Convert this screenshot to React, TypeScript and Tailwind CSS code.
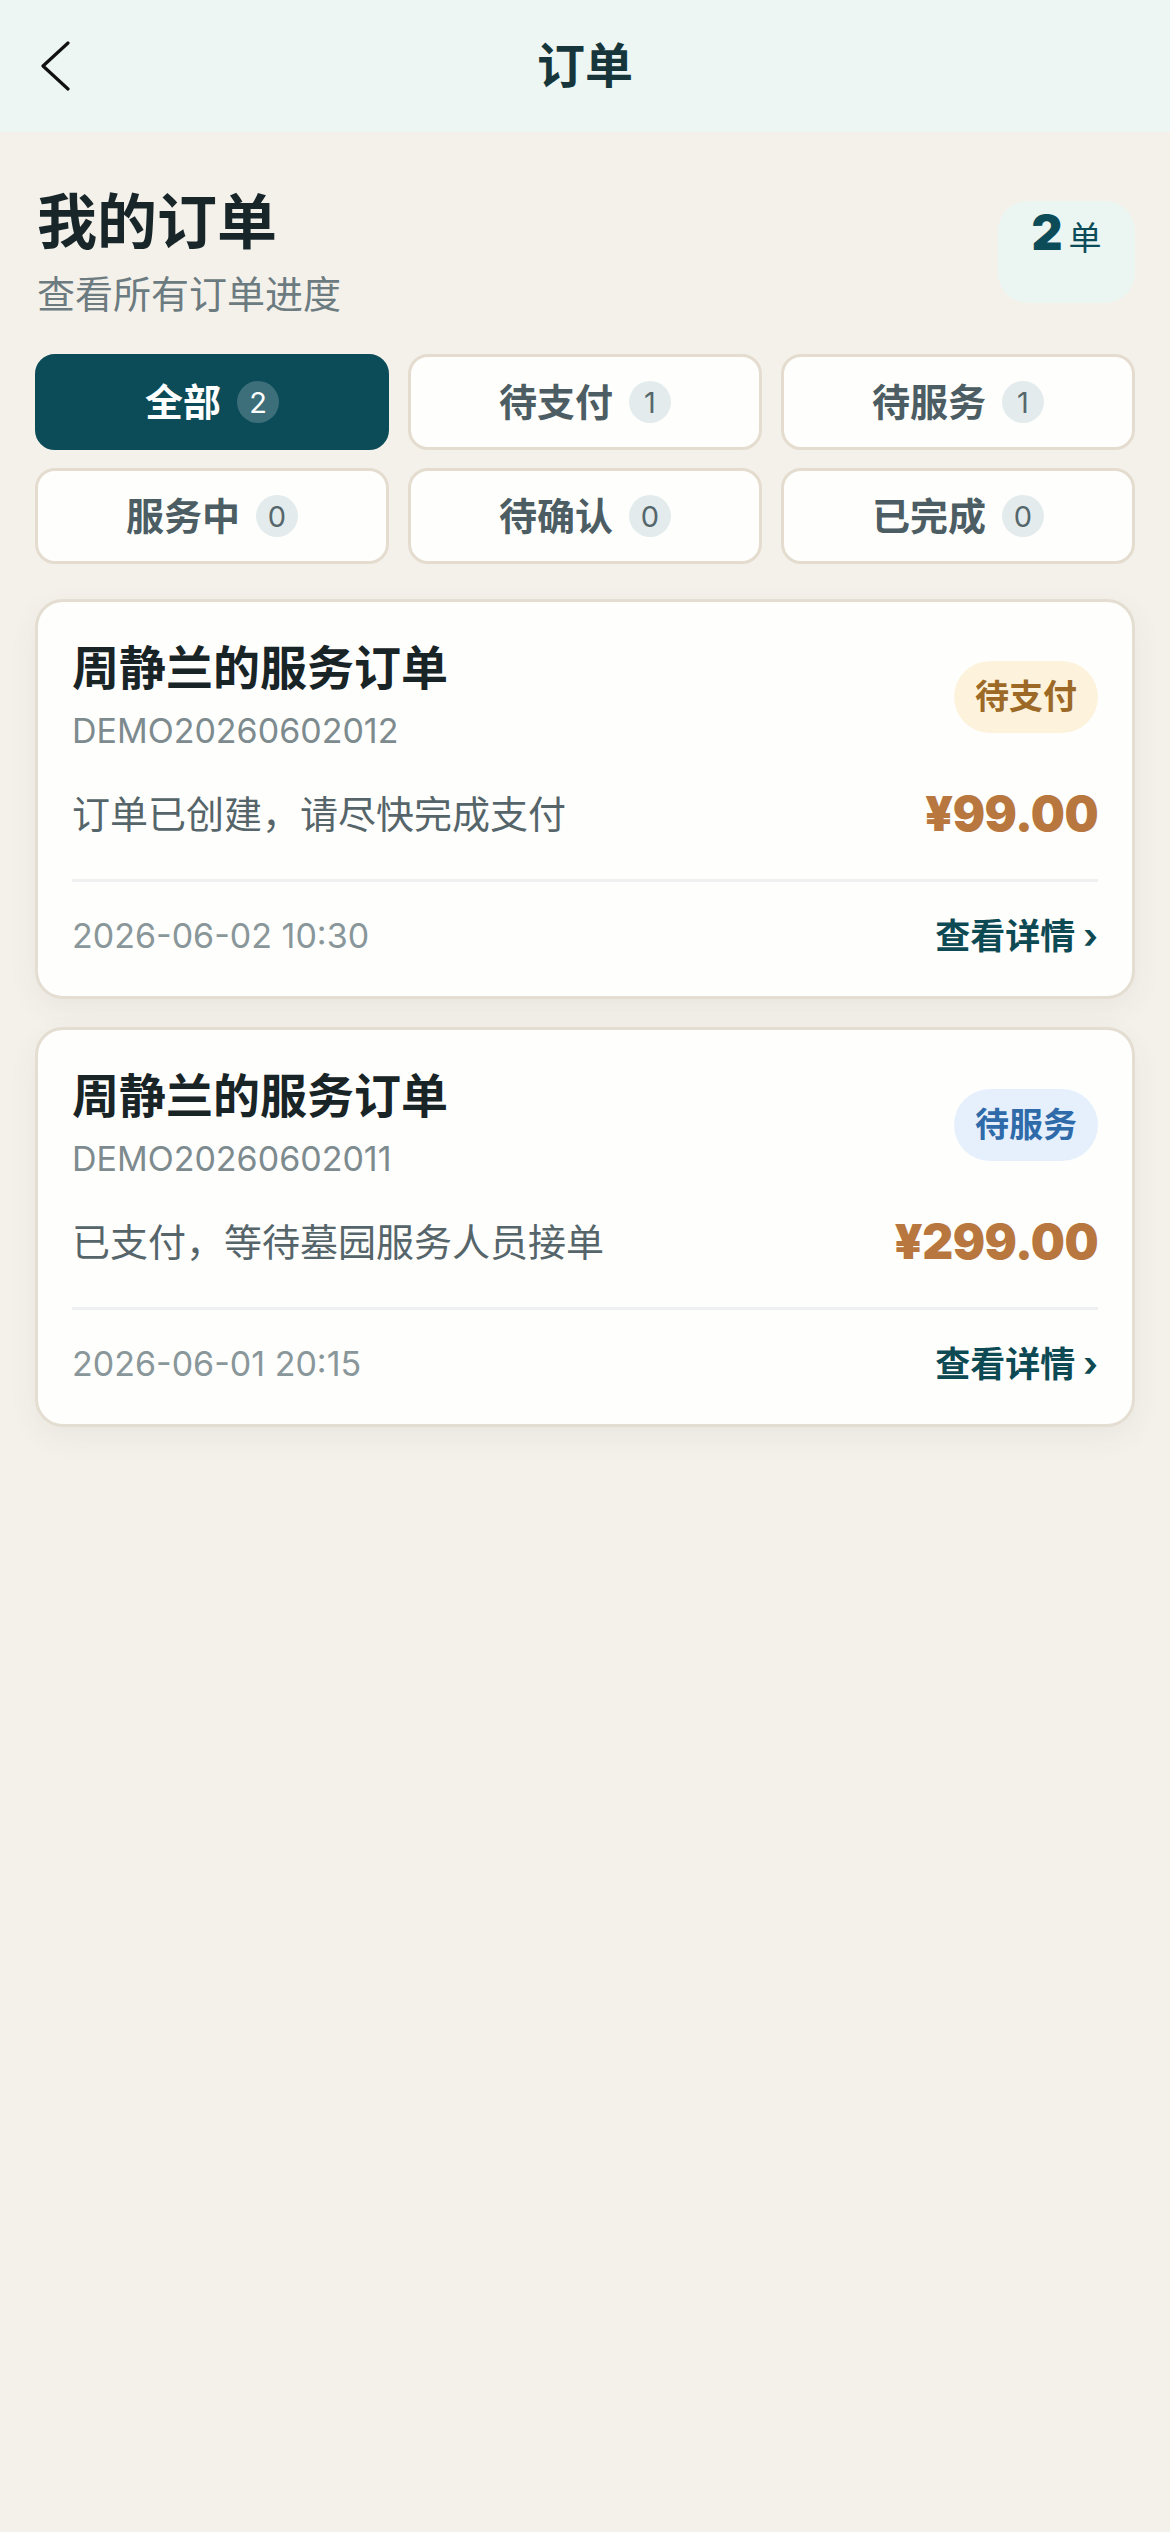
import { ReactNode } from 'react';

const FONT = { fontFamily: 'Inter, "Noto Sans CJK SC", sans-serif' };

interface Tab {
  id: string;
  label: string;
  count: number;
}

interface Order {
  title: string;
  no: string;
  status: string;
  statusTone: 'pay' | 'service';
  desc: string;
  price: string;
  time: string;
}

const tabs: Tab[] = [
  { id: 'all', label: '全部', count: 2 },
  { id: 'pay', label: '待支付', count: 1 },
  { id: 'service', label: '待服务', count: 1 },
  { id: 'doing', label: '服务中', count: 0 },
  { id: 'confirm', label: '待确认', count: 0 },
  { id: 'done', label: '已完成', count: 0 }
];

const orders: Order[] = [
  {
    title: '周静兰的服务订单',
    no: 'DEMO20260602012',
    status: '待支付',
    statusTone: 'pay',
    desc: '订单已创建，请尽快完成支付',
    price: '¥99.00',
    time: '2026-06-02 10:30'
  },
  {
    title: '周静兰的服务订单',
    no: 'DEMO20260602011',
    status: '待服务',
    statusTone: 'service',
    desc: '已支付，等待墓园服务人员接单',
    price: '¥299.00',
    time: '2026-06-01 20:15'
  }
];

const NavBar = () => (
  <div className="h-[132px] bg-[#edf6f2] grid grid-cols-[1fr_auto_1fr] items-center">
    <div className="pl-[40px] flex items-center">
      <svg width="30" height="50" viewBox="0 0 30 50" fill="none">
        <polyline
          points="28,2 3,25 28,48"
          stroke="#111"
          strokeWidth="3.2"
          strokeLinecap="round"
          strokeLinejoin="round"
        />
      </svg>
    </div>
    <h1 className="text-[48px] font-bold text-[#17363b] leading-none">订单</h1>
    <div />
  </div>
);

const TabButton = ({ tab, active }: { tab: Tab; active: boolean }) => (
  <button
    className={`h-[96px] rounded-[20px] flex items-center justify-center gap-[16px] border-[3px] ${
      active ? 'bg-[#0c4c59] border-[#0c4c59]' : 'bg-[#fefefc] border-[#e4dccf]'
    }`}
  >
    <span
      className={`text-[38px] font-bold leading-none ${active ? 'text-white' : 'text-[#4c5d63]'}`}
    >
      {tab.label}
    </span>
    <span
      className={`w-[42px] h-[42px] rounded-full flex items-center justify-center text-[29px] leading-none ${
        active ? 'bg-white/20 text-white' : 'bg-[#e3ebed] text-[#56676c]'
      }`}
    >
      {tab.count}
    </span>
  </button>
);

const StatusPill = ({ tone, children }: { tone: Order['statusTone']; children: ReactNode }) => (
  <span
    className={`h-[72px] px-[21px] rounded-full flex items-center text-[34px] font-bold leading-none ${
      tone === 'pay' ? 'bg-[#fdf3dd] text-[#9c6a26]' : 'bg-[#e6f0fd] text-[#2f6aa9]'
    }`}
  >
    {children}
  </span>
);

const OrderCard = ({ order }: { order: Order }) => (
  <div className="bg-[#fefefc] border-[3px] border-[#e4ddd1] rounded-[28px] px-[34px] pt-[36px] pb-[36px] shadow-[0_10px_30px_rgba(60,50,30,0.06)]">
    <div className="flex items-center justify-between">
      <div>
        <div className="text-[47px] font-bold leading-[60px] text-[#192427]">{order.title}</div>
        <div className="mt-[9px] text-[34px] leading-[48px] text-[#7d8b8f]">{order.no}</div>
      </div>
      <StatusPill tone={order.statusTone}>{order.status}</StatusPill>
    </div>
    <div className="mt-[32px] flex items-center justify-between">
      <span className="text-[38px] leading-[54px] text-[#55656a]">{order.desc}</span>
      <span className="text-[48px] font-black leading-[54px] text-[#b8773e] tracking-[-0.5px]">
        {order.price}
      </span>
    </div>
    <div className="mt-[38px] h-[3px] bg-[#eef0f1]" />
    <div className="mt-[30px] flex items-center justify-between">
      <span className="text-[34px] leading-[48px] text-[#89979a]">{order.time}</span>
      <span className="text-[35px] font-bold leading-[48px] text-[#0e4a54] flex items-center gap-[8px]">
        查看详情
        <span className="text-[34px]">›</span>
      </span>
    </div>
  </div>
);

export default function App() {
  return (
    <div className="min-h-screen bg-[#f4f1eb]" style={FONT}>
      <NavBar />
      <div className="px-[35px]">
        <div className="pt-[53px] flex items-start justify-between">
          <div className="pl-[2px]">
            <h2 className="text-[60px] font-bold leading-[75px] text-[#18262a]">我的订单</h2>
            <p className="mt-[8px] text-[38px] leading-[53px] text-[#6c7b80]">查看所有订单进度</p>
          </div>
          <div className="mt-[16px] w-[137px] h-[102px] rounded-[30px] bg-[#ebf5f2] flex items-baseline justify-center pt-[8px]">
            <span className="text-[48px] font-black leading-none text-[#0c4c59]">2</span>
            <span className="ml-[6px] text-[33px] leading-none text-[#0c4c59]">单</span>
          </div>
        </div>

        <div className="mt-[33px] grid grid-cols-3 gap-x-[19px] gap-y-[18px]">
          {tabs.map((tab) => (
            <TabButton key={tab.id} tab={tab} active={tab.id === 'all'} />
          ))}
        </div>

        <div className="mt-[35px] flex flex-col gap-[28px]">
          {orders.map((order) => (
            <OrderCard key={order.no} order={order} />
          ))}
        </div>
      </div>
    </div>
  );
}
